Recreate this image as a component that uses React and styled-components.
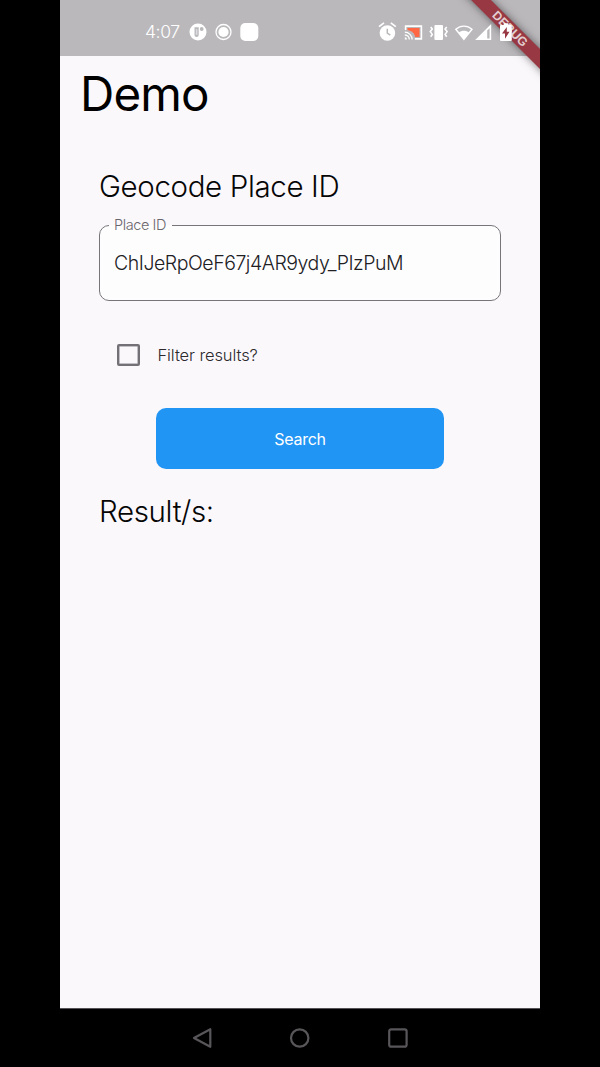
import React from "react";
import styled, { createGlobalStyle } from "styled-components";

const GlobalStyle = createGlobalStyle`
  * { box-sizing: border-box; }
  body { margin: 0; background: #000; }
`;

const Stage = styled.div`
  height: 1067px;
  display: flex;
  justify-content: center;
  background: #000;
`;

const Phone = styled.div`
  position: relative;
  width: 480px;
  height: 1067px;
  overflow: hidden;
  display: flex;
  flex-direction: column;
  font-family: Inter, "Liberation Sans", sans-serif;
  font-weight: 300;
  background: #fbf8fc;
  color: #060606;
  white-space: nowrap;
`;

const StatusBar = styled.header`
  height: 56px;
  flex: none;
  display: flex;
  align-items: center;
  justify-content: space-between;
  padding: 8px 27px 0 85px;
  background: #bab8bb;
  color: #fff;
`;

const StatusGroup = styled.div`
  position: ${(p) => (p.$raised ? "relative" : "static")};
  z-index: 2;
  display: flex;
  align-items: center;
  svg { display: block; }
`;

const Clock = styled.span`
  width: 44px;
  font-size: 17.5px;
  line-height: 20px;
  letter-spacing: -0.4px;
`;

const Ribbon = styled.div`
  position: absolute;
  z-index: 1;
  left: 380px;
  top: 22px;
  width: 140px;
  height: 14px;
  transform: rotate(45deg);
  background: #973842;
  box-shadow: 0 0 9px rgba(0, 0, 0, 0.5);
  color: #e3cdd0;
  font: 700 12.3px/14px "Liberation Sans", sans-serif;
  text-align: center;
`;

const Page = styled.main`
  flex: 1;
  display: flex;
  flex-direction: column;
`;

const Title = styled.h1`
  margin: 8px 0 0 20px;
  font-size: 47.5px;
  line-height: 60px;
  font-weight: 370;
  letter-spacing: -0.9px;
  color: #000;
`;

const Section = styled.section`
  display: flex;
  flex-direction: column;
  padding: 43px 39px 0;
`;

const Heading = styled.h2`
  margin: 0;
  font-size: 29.5px;
  line-height: 38px;
  font-weight: 300;
  letter-spacing: -0.36px;
`;

const Field = styled.fieldset`
  height: 84px;
  min-width: 0;
  margin: 11.5px 0 0;
  padding: 0 14px;
  border: 1.5px solid #77757a;
  border-radius: 10px;
  background: #fefdfe;
`;

const FieldLabel = styled.legend`
  margin-left: -5px;
  width: 63px;
  padding: 0 5px 2px;
  font-size: 14.5px;
  line-height: 15px;
  letter-spacing: -0.42px;
  color: #69676c;
`;

const FieldValue = styled.div`
  margin-top: 16px;
  font-size: 19.5px;
  line-height: 26px;
  letter-spacing: -0.47px;
  color: #202024;
`;

const CheckRow = styled.label`
  display: flex;
  align-items: center;
  gap: 18px;
  height: 24px;
  margin: 42.5px 0 0 18px;
  font-size: 16.5px;
  letter-spacing: -0.1px;
  color: #2b292c;
`;

const Checkbox = styled.span`
  width: 22.5px;
  height: 22px;
  border: 2px solid #747176;
  box-shadow: inset 0 0 0 0.5px #8b888d;
  border-radius: 2px;
`;

const SearchButton = styled.button`
  align-self: center;
  width: 288px;
  height: 61px;
  margin: 41px 0 23px;
  padding: 0;
  border: 0;
  border-radius: 10px;
  background: #2195f4;
  color: #fff;
  font: 400 16px/24px Inter, sans-serif;
  letter-spacing: -0.3px;
`;

const NavBar = styled.nav`
  height: 59px;
  flex: none;
  display: flex;
  justify-content: center;
  align-items: center;
  gap: 74px;
  background: #000;
  border-top: 1px solid #555257;
`;

function StatusLeft() {
  return (
    <StatusGroup>
      <Clock>4:07</Clock>
      <svg width="72" height="20" viewBox="0 0 72 20">
        <circle cx="9" cy="10" r="8.5" fill="#fff" />
        <path d="M5.5 5.2h4.2v7.8a2.1 2.1 0 0 1-4.2 0z" fill="#bab8bb" />
        <path d="M6.8 7.2h1.6v5.6H6.8z" fill="#dddcde" />
        <circle cx="12.7" cy="7" r="1.9" fill="#bab8bb" />
        <circle cx="34.5" cy="10" r="7.5" fill="none" stroke="#fff" strokeWidth="1.3" />
        <circle cx="34.5" cy="10" r="5.1" fill="#fff" />
        <rect x="51.3" y="1" width="18" height="18" rx="5" fill="#fff" />
      </svg>
    </StatusGroup>
  );
}

function StatusRight() {
  return (
    <StatusGroup $raised>
      <svg width="136" height="22" viewBox="0 0 136 22" fill="#fff">
        <circle cx="10.4" cy="12" r="7.8" />
        <path d="M2 5.7 7 1.8M18.8 5.7l-5-3.9" stroke="#fff" strokeWidth="1.7" />
        <path d="M10.3 7.7v4.5l3 2" fill="none" stroke="#bab8bb" strokeWidth="1.5" />
        <path d="M28.6 9V5.1h15.8v12.8h-6.6" fill="none" stroke="#fff" strokeWidth="1.6" />
        <path d="M30.5 7h12v9h-4.3c-.8-3.7-3.2-6.2-7.7-7z" fill="#ff6842" />
        <path d="M27.8 11.2a7.3 7.3 0 0 1 7.3 7.3M27.8 14a4.5 4.5 0 0 1 4.5 4.5" fill="none" stroke="#fff" strokeWidth="1.3" />
        <path d="M27.8 16.3a2.2 2.2 0 0 1 2.2 2.2h-2.2z" />
        <rect x="57.4" y="4" width="8.6" height="15" rx="1" />
        <path d="m53.7 6 1.6 2-2 2.6 2 2.8-1.6 2.4M69.7 6l-1.6 2 2 2.6-2 2.8 1.6 2.4" fill="none" stroke="#fff" strokeWidth="1.6" />
        <path d="M78.8 8.3C83.5 4 90.3 4 95 8.3L86.9 18.3z" fill="none" stroke="#fff" strokeWidth="1.4" />
        <path d="M81.6 11.7c3.3-2.5 7.3-2.5 10.6 0L86.9 18.3z" />
        <path d="M98.2 19 114.2 3V19z" />
        <path d="M110.2 9.6 112.6 7.2v10.3h-2.4z" fill="#bab8bb" />
        <path d="M124 4h2.7V2.2h4.6V4h2.5a1 1 0 0 1 1 1v14a1 1 0 0 1-1 1H124a1 1 0 0 1-1-1V5a1 1 0 0 1 1-1z" />
        <path d="M129.8 6 125 12.5h3v5.2l4.5-7h-2.7z" fill="#973842" />
      </svg>
    </StatusGroup>
  );
}

export default function App() {
  return (
    <Stage>
      <GlobalStyle />
      <Phone>
        <StatusBar>
          <StatusLeft />
          <StatusRight />
        </StatusBar>
        <Ribbon>DEBUG</Ribbon>
        <Page>
          <Title>Demo</Title>
          <Section>
            <Heading>Geocode Place ID</Heading>
            <Field>
              <FieldLabel>Place ID</FieldLabel>
              <FieldValue>ChIJeRpOeF67j4AR9ydy_PIzPuM</FieldValue>
            </Field>
            <CheckRow>
              <Checkbox />
              Filter results?
            </CheckRow>
            <SearchButton>Search</SearchButton>
            <Heading>Result/s:</Heading>
          </Section>
        </Page>
        <NavBar>
          <svg width="24" height="24" viewBox="0 0 24 24" fill="none" stroke="#59565a" strokeWidth="2.2" strokeLinejoin="round">
            <path d="M20.3 3.2v17.6L4 12z" />
          </svg>
          <svg width="24" height="24" viewBox="0 0 24 24" fill="none" stroke="#59565a" strokeWidth="2.2">
            <circle cx="11.7" cy="12" r="8.7" />
          </svg>
          <svg width="24" height="24" viewBox="0 0 24 24" fill="none" stroke="#59565a" strokeWidth="2.2">
            <rect x="3.2" y="3.3" width="17.4" height="17.4" rx="2" />
          </svg>
        </NavBar>
      </Phone>
    </Stage>
  );
}
